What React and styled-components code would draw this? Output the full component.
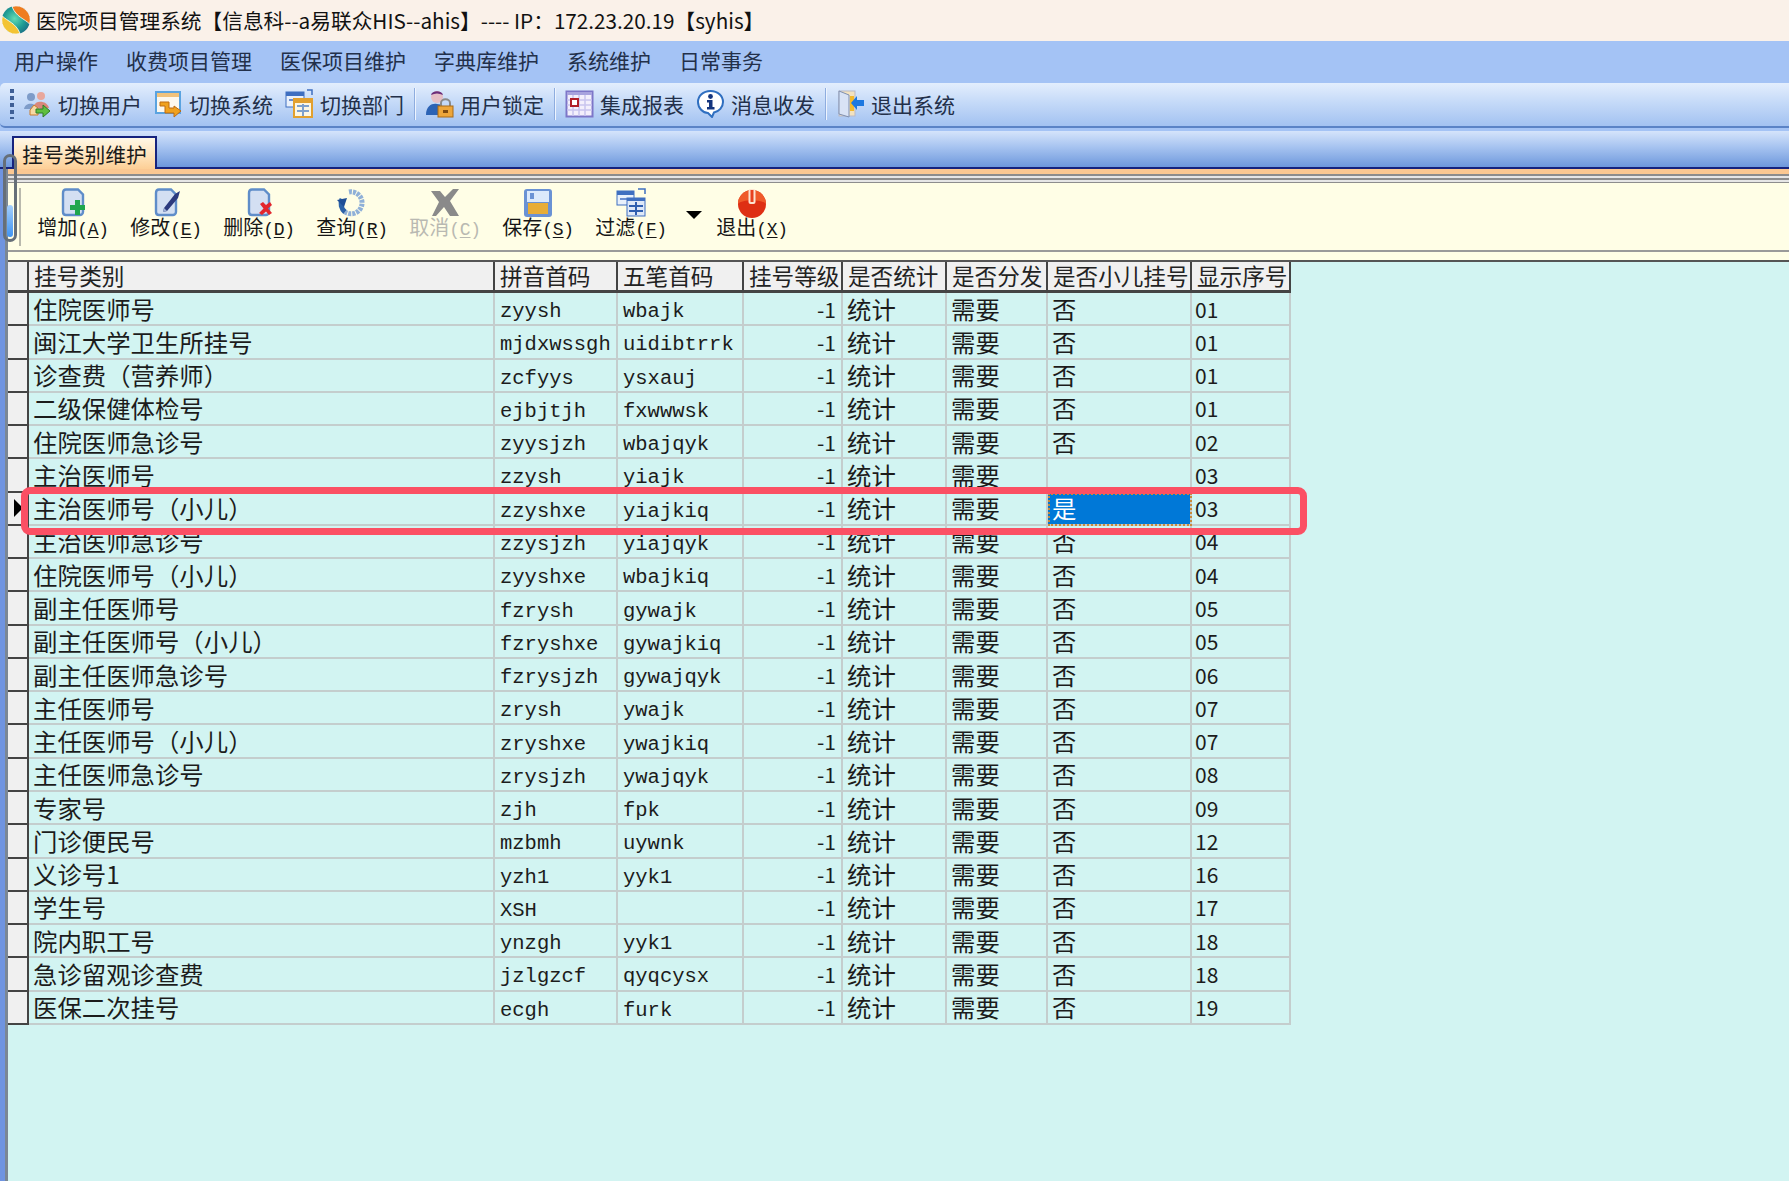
import React from 'react';
import styled, { createGlobalStyle } from 'styled-components';

const CJK = '"Noto Sans CJK SC", "Noto Sans", sans-serif';
const MONO = '"Liberation Mono", "Noto Sans CJK SC", monospace';

const GlobalStyle = createGlobalStyle`
  html, body {
    margin: 0;
    padding: 0;
    background: #d2f4f2;
    overflow: hidden;
  }
  * {
    box-sizing: border-box;
  }
`;

const Page = styled.div`
  width: 1789px;
  height: 1181px;
  display: flex;
  flex-direction: column;
  font-family: ${CJK};
  color: #1c1c1c;
  overflow: hidden;
`;

const TitleBar = styled.div`
  height: 41px;
  flex: none;
  display: flex;
  align-items: center;
  gap: 6px;
  padding: 0 0 2px 2px;
  background: #faf1e9;
  font-size: 20.7px;
  white-space: pre;
  color: #111;
`;

const MenuBar = styled.div`
  height: 42px;
  flex: none;
  display: flex;
  align-items: center;
  gap: 28px;
  padding: 0 0 4px 14px;
  background: #a4c3f5;
  font-size: 21px;
  color: #23304a;
`;

const ToolbarBack = styled.div`
  flex: none;
  background: #a4c3f5;
  padding-bottom: 3px;
`;

const Toolbar = styled.div`
  height: 45px;
  display: flex;
  align-items: center;
  gap: 12px;
  padding: 0 0 2px 10px;
  border-radius: 5px 0 0 5px;
  border-bottom: 2px solid #5b83c6;
  background: linear-gradient(#e3eefd 0%, #c5daf8 45%, #a3c2f1 100%);
`;

const Gripper = styled.div`
  width: 4px;
  height: 30px;
  margin-right: -3px;
  background: repeating-linear-gradient(#3f5f96 0 4px, transparent 4px 7px);
`;

const ToolItem = styled.div`
  display: flex;
  align-items: center;
  gap: 6px;
  font-size: 21px;
  color: #23304a;
  white-space: nowrap;
`;

const ToolIcon = styled.svg`
  width: 29px;
  height: 29px;
  flex: none;
`;

const ToolSeparator = styled.div`
  width: 2px;
  height: 32px;
  margin: 0 -2.5px;
  background: #eef4fe;
  border-left: 1px solid #8eaddf;
`;

const TabStrip = styled.div`
  height: 38px;
  flex: none;
  display: flex;
  align-items: flex-end;
  padding-left: 12px;
  border-bottom: 2px solid #16237e;
  background: linear-gradient(#d5e4fb 0%, #a6c3f0 45%, #6e98dc 100%);
`;

const Tab = styled.div`
  width: 145px;
  height: 33px;
  margin-bottom: -2px;
  display: flex;
  align-items: center;
  justify-content: center;
  font-size: 20.8px;
  line-height: 28px;
  color: #1a1a1a;
  border: 2px solid #16237e;
  border-bottom: none;
  background: linear-gradient(#fff8e6 0%, #ffe2b8 60%, #fdcf96 100%);
`;

const Body = styled.div`
  position: relative;
  flex: 1;
  display: flex;
  min-height: 0;
`;

const Rail = styled.div`
  width: 8px;
  flex: none;
  border-right: 3px solid #7b8794;
  background: #6f94e0;
`;

const Scroller = styled.div`
  position: absolute;
  left: 3px;
  top: -15px;
  width: 14px;
  height: 88px;
  padding: 0 1px 2px;
  display: flex;
  align-items: flex-end;
  border: 3px solid #666f78;
  border-radius: 8px;

  &::before {
    content: '';
    width: 100%;
    height: 32px;
    border-radius: 3px;
    background: linear-gradient(#a5cffb, #3f93f2);
  }
`;

const Content = styled.div`
  flex: 1;
  display: flex;
  flex-direction: column;
  min-width: 0;
  background: #d2f4f2;
`;

const Band = styled.div`
  height: 14px;
  flex: none;
  border-top: 5px solid #fbc892;
  background: repeating-linear-gradient(#8d8d8d 0 2px, #e6e6e6 2px 4px);
  background-clip: padding-box;
`;

const ActionPanel = styled.div`
  height: 69px;
  flex: none;
  display: flex;
  align-items: flex-start;
  gap: 21px;
  padding: 5px 0 0 11px;
  background: #fffee6;
  border-bottom: 2px solid #9a9a9a;
`;

const PanelGrip = styled.div`
  width: 2px;
  height: 58px;
  margin-right: -5px;
  background: #b9b9ad;
`;

const ActionItem = styled.div`
  width: 72px;
  margin-left: ${({ $shift }) => $shift || 0}px;
  display: flex;
  flex-direction: column;
  align-items: center;
  color: ${({ $disabled }) => ($disabled ? '#b9b9b2' : '#161616')};
`;

const ActionIcon = styled.svg`
  width: 30px;
  height: 30px;
  display: block;
`;

const ActionLabel = styled.div`
  display: flex;
  align-items: baseline;
  height: 26px;
  margin-top: -4px;
  line-height: 26px;
  font-size: 20px;
  white-space: nowrap;

  span {
    font-family: ${MONO};
    font-size: 18px;
    width: 10.5px;
    text-align: center;
  }

  u {
    text-underline-offset: 2px;
  }
`;

const DropCaret = styled.div`
  width: 0;
  height: 0;
  margin: 23px 0 0 -2px;
  border-left: 8px solid transparent;
  border-right: 8px solid transparent;
  border-top: 8px solid #000;
`;

const PanelGap = styled.div`
  height: 10px;
  flex: none;
  background: #fffee6;
  border-bottom: 2px solid #555;
`;

const Table = styled.div`
  width: 1283px;
  display: flex;
  flex-direction: column;
`;

const COLUMNS = '21px 466px 123px 126px 99px 104px 101px 144px 99px';

const HeaderRow = styled.div`
  height: 31px;
  display: grid;
  grid-template-columns: ${COLUMNS};
  background: #f0f0f0;
  border-bottom: 3px solid #444;
`;

const HeaderCell = styled.div`
  display: flex;
  align-items: center;
  padding-left: 5px;
  font-size: 22.6px;
  line-height: 28px;
  white-space: nowrap;
  color: #222;
  border-right: 2px solid #444;
`;

const Row = styled.div`
  position: relative;
  height: 33.27px;
  display: grid;
  grid-template-columns: ${COLUMNS};
  grid-template-rows: 33.27px;

  ${({ $marked }) => $marked && `
    z-index: 2;
    &::after {
      content: '';
      position: absolute;
      left: 13px;
      right: -16px;
      top: -6px;
      bottom: -9px;
      border: 7px solid #fb5064;
      border-radius: 9px;
      pointer-events: none;
    }
  `}
`;

const Indicator = styled.div`
  display: flex;
  align-items: center;
  padding-left: 6px;
  background: #f0f0f0;
  border-right: 2px solid #444;
  border-bottom: 2px solid #444;

  ${({ $current }) => $current && `
    &::before {
      content: '';
      width: 0;
      height: 0;
      border-top: 9px solid transparent;
      border-bottom: 9px solid transparent;
      border-left: 9px solid #000;
    }
  `}
`;

const Cell = styled.div`
  display: flex;
  align-items: center;
  padding-left: 4px;
  white-space: nowrap;
  font-size: 24.4px;
  line-height: 30px;
  color: #1c1c1c;
  border-right: 2px solid #c4cdcd;
  border-bottom: 2px solid #c4cdcd;
`;

const CodeCell = styled(Cell)`
  padding: 7px 0 0 5px;
  font-family: ${MONO};
  font-size: 20.5px;
  line-height: 24px;
`;

const NumberCell = styled(Cell)`
  justify-content: ${({ $right }) => ($right ? 'flex-end' : 'flex-start')};
  padding: 0 ${({ $right }) => ($right ? '5px' : '0')} 0 3px;
  font-size: 21px;
`;

const SelectedCell = styled(Cell)`
  color: #fff;
  background: #0078d7;
  outline: 2px dotted #c98a3a;
  outline-offset: -2px;
`;

const Logo = () => (
  <svg width="28" height="28" viewBox="0 0 28 28">
    <defs>
      <radialGradient id="logoCore" cx="45%" cy="45%" r="60%">
        <stop offset="0%" stopColor="#63dcb4" />
        <stop offset="60%" stopColor="#1f9c94" />
        <stop offset="100%" stopColor="#1c6f86" />
      </radialGradient>
    </defs>
    <circle cx="14" cy="14" r="14" fill="url(#logoCore)" />
    <path d="M10 .6A14 14 0 0 1 27.6 18C23 13 14 11 10 .6Z" fill="#ef7d1f" stroke="#fff" strokeWidth=".8" />
    <path d="M.4 10A14 14 0 0 0 18 27.4C14 17 5 15 .4 10Z" fill="#f3c334" stroke="#fff" strokeWidth=".8" />
  </svg>
);

const iconSwitchUser = (
  <>
    <circle cx="8" cy="8" r="4" fill="#7e9cc9" />
    <path d="M1 20C2 13 13 13 14 20Z" fill="#7e9cc9" />
    <circle cx="18" cy="7" r="4" fill="#e8a79c" />
    <path d="M11 17C12 11 24 11 26 19L18 20Z" fill="#d9877c" />
    <path d="M7 21L11 16L15 19V26H7Z" fill="#f6d9a4" stroke="#c87a2d" />
    <path d="M13 20H20V16L27 22L20 28V24H13Z" fill="#5fbf3f" stroke="#2f7d2a" />
  </>
);

const iconSwitchSystem = (
  <>
    <rect x="2" y="3" width="24" height="21" fill="#fdf8ee" stroke="#5aa3e0" strokeWidth="2" />
    <rect x="3" y="4" width="22" height="4" fill="#f1c27b" />
    <path d="M6 13H15V19H20V17L27 22L20 28V24H11V17H6Z" fill="#f0a11e" stroke="#bd6a10" />
  </>
);

const iconSwitchDept = (
  <>
    <rect x="1" y="3" width="18" height="15" fill="#eaf1fb" stroke="#3f6fc0" />
    <rect x="1" y="3" width="18" height="4" fill="#3f6fc0" />
    <rect x="4" y="10" width="8" height="2" fill="#6c8fd0" />
    <path d="M22 1H27V6" fill="none" stroke="#3f6fc0" strokeWidth="1.5" />
    <rect x="9" y="10" width="18" height="18" fill="#fdf6e3" stroke="#e2a02f" strokeWidth="2" />
    <rect x="9" y="10" width="18" height="4" fill="#e2a02f" />
    <path d="M12 17H24M12 22H24M18 15V27" stroke="#7fa0cc" strokeWidth="2" />
  </>
);

const iconUserLock = (
  <>
    <circle cx="12" cy="8" r="6" fill="#e5bfc6" />
    <path d="M6 6C7 1 17 1 18 6C14 4 10 4 6 6Z" fill="#6b2d7a" />
    <path d="M1 26C1 16 8 14 12 15C17 15 20 18 20 26Z" fill="#2c63b5" />
    <path d="M16 17V14C16 9 25 9 25 14V17" fill="none" stroke="#8a8a8a" strokeWidth="2" />
    <rect x="13" y="17" width="15" height="11" fill="#eda63b" stroke="#a96a17" />
    <rect x="18" y="21" width="5" height="3" fill="#7d4a10" />
  </>
);

const iconReport = (
  <>
    <rect x="1.5" y="2.5" width="26" height="25" fill="#f3effc" stroke="#7d76c8" strokeWidth="2" />
    <rect x="2" y="3" width="25" height="3" fill="#a7a2de" />
    <path d="M2 11H27M2 16H27M2 21H27M8 6V27M14 6V27M20 6V27" stroke="#c9c5ee" strokeWidth="1.5" />
    <rect x="6" y="10" width="7" height="7" fill="#fff" stroke="#b01f2a" strokeWidth="2" />
  </>
);

const iconInfo = (
  <>
    <path d="M14.5 2C7 2 2 7 2 13C2 19 7 24 12 24L16 28L18 23.5C23 22.5 27 18.5 27 13C27 7 22 2 14.5 2Z" fill="#fff" stroke="#2f6fc0" strokeWidth="2" />
    <circle cx="14.5" cy="7.5" r="2.4" fill="#14357e" />
    <path d="M11 11H16.5V18H18.5V20.5H11V18H13V13.5H11Z" fill="#14357e" />
  </>
);

const iconExit = (
  <>
    <rect x="3" y="2" width="16" height="25" fill="#f3e2bf" stroke="#b9b9c6" />
    <path d="M3 2L13 6V28L3 25Z" fill="#d9e3f5" stroke="#7f8fb0" />
    <rect x="14" y="7" width="4" height="15" fill="#f2b92e" />
    <path d="M28 11H21V7L15 14L21 21V17H28Z" fill="#1c78e0" />
  </>
);

const iconDoc = (
  <path d="M8 1.5H20L25 6.5V24C25 26 23 27 22 27H8C6 27 5 26 5 24V5C5 3 6 1.5 8 1.5Z" fill="#d3dff2" stroke="#5f8dc9" strokeWidth="2.4" />
);

const iconAdd = (
  <>
    {iconDoc}
    <path d="M17 12H22V17H27V22H22V27H17V22H12V17H17Z" fill="#1fa64d" />
  </>
);

const iconEdit = (
  <>
    {iconDoc}
    <path d="M13 20L24 6L29 3L27 10L16 23L12 24Z" fill="#2c3a7d" />
    <path d="M12 24L13 20L16 23Z" fill="#9fb1d6" />
  </>
);

const iconDelete = (
  <>
    {iconDoc}
    <path d="M16 16L19 14L22 17L26 14L28 17L24 20.5L28 25L25 27L22 23.5L18 27L15 25L19.5 20.5Z" fill="#e3262c" />
  </>
);

const iconQuery = (
  <>
    <path d="M12 4A11 11 0 1 1 8 24" fill="none" stroke="#8fb0d8" strokeWidth="5" strokeDasharray="3 1" />
    <path d="M8 24A11 11 0 0 1 5 11" fill="none" stroke="#2c62a8" strokeWidth="5" />
    <path d="M0 12L10 10L7 19Z" fill="#1f4f96" />
  </>
);

const iconCancel = (
  <path d="M1 3H10L15 9L23 1H29L20 13L29 28H20L14 19L6 28H2L9 14Z" fill="#8a8a8a" />
);

const iconSave = (
  <>
    <rect x="1" y="1" width="28" height="28" rx="3" fill="#6a92d4" />
    <rect x="4" y="3" width="22" height="11" fill="#dbe9fb" />
    <rect x="7" y="5" width="4" height="6" fill="#6a92d4" />
    <rect x="5" y="15" width="20" height="11" fill="#e8ad37" />
  </>
);

const iconFilter = (
  <>
    <rect x="1" y="3" width="17" height="14" fill="#e8f0fb" stroke="#3f6fc0" />
    <rect x="1" y="3" width="17" height="4" fill="#3f6fc0" />
    <rect x="4" y="10" width="9" height="2" fill="#6c8fd0" />
    <path d="M22 1H29V6" fill="none" stroke="#3f6fc0" strokeWidth="1.5" />
    <rect x="11" y="10" width="18" height="18" fill="#dfe9f8" stroke="#3f6fc0" />
    <rect x="11" y="10" width="18" height="3" fill="#3f6fc0" />
    <path d="M13 18H27M13 23H27M20 14V27" stroke="#2f5fb0" strokeWidth="2" />
  </>
);

const iconQuit = (
  <>
    <circle cx="15" cy="16" r="14" fill="#de2f14" />
    <path d="M1 16A14 14 0 0 1 29 16C25 11 5 11 1 16Z" fill="#ef5a2a" />
    <rect x="11.5" y="1" width="7" height="15" rx="2" fill="#fde3d2" />
    <rect x="13.5" y="2" width="3" height="12" fill="#e8401e" />
  </>
);

const TOOLS = [
  { label: '切换用户', icon: iconSwitchUser },
  { label: '切换系统', icon: iconSwitchSystem },
  { label: '切换部门', icon: iconSwitchDept, sep: true },
  { label: '用户锁定', icon: iconUserLock, sep: true },
  { label: '集成报表', icon: iconReport },
  { label: '消息收发', icon: iconInfo, sep: true },
  { label: '退出系统', icon: iconExit },
];

const ACTIONS = [
  { name: '增加', key: 'A', icon: iconAdd },
  { name: '修改', key: 'E', icon: iconEdit },
  { name: '删除', key: 'D', icon: iconDelete },
  { name: '查询', key: 'R', icon: iconQuery },
  { name: '取消', key: 'C', icon: iconCancel, disabled: true },
  { name: '保存', key: 'S', icon: iconSave },
  { name: '过滤', key: 'F', icon: iconFilter },
];

const MENUS = ['用户操作', '收费项目管理', '医保项目维护', '字典库维护', '系统维护', '日常事务'];

const HEADERS = ['挂号类别', '拼音首码', '五笔首码', '挂号等级', '是否统计', '是否分发', '是否小儿挂号', '显示序号'];

const ROWS = [
  ['住院医师号', 'zyysh', 'wbajk', '否', '01'],
  ['闽江大学卫生所挂号', 'mjdxwssgh', 'uidibtrrk', '否', '01'],
  ['诊查费（营养师）', 'zcfyys', 'ysxauj', '否', '01'],
  ['二级保健体检号', 'ejbjtjh', 'fxwwwsk', '否', '01'],
  ['住院医师急诊号', 'zyysjzh', 'wbajqyk', '否', '02'],
  ['主治医师号', 'zzysh', 'yiajk', '', '03'],
  ['主治医师号（小儿）', 'zzyshxe', 'yiajkiq', '是', '03'],
  ['主治医师急诊号', 'zzysjzh', 'yiajqyk', '否', '04'],
  ['住院医师号（小儿）', 'zyyshxe', 'wbajkiq', '否', '04'],
  ['副主任医师号', 'fzrysh', 'gywajk', '否', '05'],
  ['副主任医师号（小儿）', 'fzryshxe', 'gywajkiq', '否', '05'],
  ['副主任医师急诊号', 'fzrysjzh', 'gywajqyk', '否', '06'],
  ['主任医师号', 'zrysh', 'ywajk', '否', '07'],
  ['主任医师号（小儿）', 'zryshxe', 'ywajkiq', '否', '07'],
  ['主任医师急诊号', 'zrysjzh', 'ywajqyk', '否', '08'],
  ['专家号', 'zjh', 'fpk', '否', '09'],
  ['门诊便民号', 'mzbmh', 'uywnk', '否', '12'],
  ['义诊号1', 'yzh1', 'yyk1', '否', '16'],
  ['学生号', 'XSH', '', '否', '17'],
  ['院内职工号', 'ynzgh', 'yyk1', '否', '18'],
  ['急诊留观诊查费', 'jzlgzcf', 'qyqcysx', '否', '18'],
  ['医保二次挂号', 'ecgh', 'furk', '否', '19'],
];

const SELECTED = 6;

const App = () => (
  <Page>
    <GlobalStyle />
    <TitleBar>
      <Logo />
      医院项目管理系统【信息科--a易联众HIS--ahis】---- IP：172.23.20.19【syhis】
    </TitleBar>
    <MenuBar>
      {MENUS.map(m => <div key={m}>{m}</div>)}
    </MenuBar>
    <ToolbarBack>
      <Toolbar>
        <Gripper />
        {TOOLS.map(t => (
          <React.Fragment key={t.label}>
            <ToolItem>
              <ToolIcon viewBox="0 0 29 29">{t.icon}</ToolIcon>
              {t.label}
            </ToolItem>
            {t.sep && <ToolSeparator />}
          </React.Fragment>
        ))}
      </Toolbar>
    </ToolbarBack>
    <TabStrip>
      <Tab>挂号类别维护</Tab>
    </TabStrip>
    <Body>
      <Rail />
      <Scroller />
      <Content>
        <Band />
        <ActionPanel>
          <PanelGrip />
          {ACTIONS.map(a => (
            <ActionItem key={a.key} $disabled={a.disabled}>
              <ActionIcon viewBox="0 0 30 30">{a.icon}</ActionIcon>
              <ActionLabel>{a.name}<span>(</span><span><u>{a.key}</u></span><span>)</span></ActionLabel>
            </ActionItem>
          ))}
          <DropCaret />
          <ActionItem $shift={-7}>
            <ActionIcon viewBox="0 0 30 30">{iconQuit}</ActionIcon>
            <ActionLabel>退出<span>(</span><span><u>X</u></span><span>)</span></ActionLabel>
          </ActionItem>
        </ActionPanel>
        <PanelGap />
        <Table>
          <HeaderRow>
            <HeaderCell />
            {HEADERS.map(h => <HeaderCell key={h}>{h}</HeaderCell>)}
          </HeaderRow>
          {ROWS.map((r, i) => {
            const FlagCell = i === SELECTED ? SelectedCell : Cell;
            return (
              <Row key={r[0]} $marked={i === SELECTED}>
                <Indicator $current={i === SELECTED} />
                <Cell>{r[0]}</Cell>
                <CodeCell>{r[1]}</CodeCell>
                <CodeCell>{r[2]}</CodeCell>
                <NumberCell $right>-1</NumberCell>
                <Cell>统计</Cell>
                <Cell>需要</Cell>
                <FlagCell>{r[3]}</FlagCell>
                <NumberCell>{r[4]}</NumberCell>
              </Row>
            );
          })}
        </Table>
      </Content>
    </Body>
  </Page>
);

export default App;
